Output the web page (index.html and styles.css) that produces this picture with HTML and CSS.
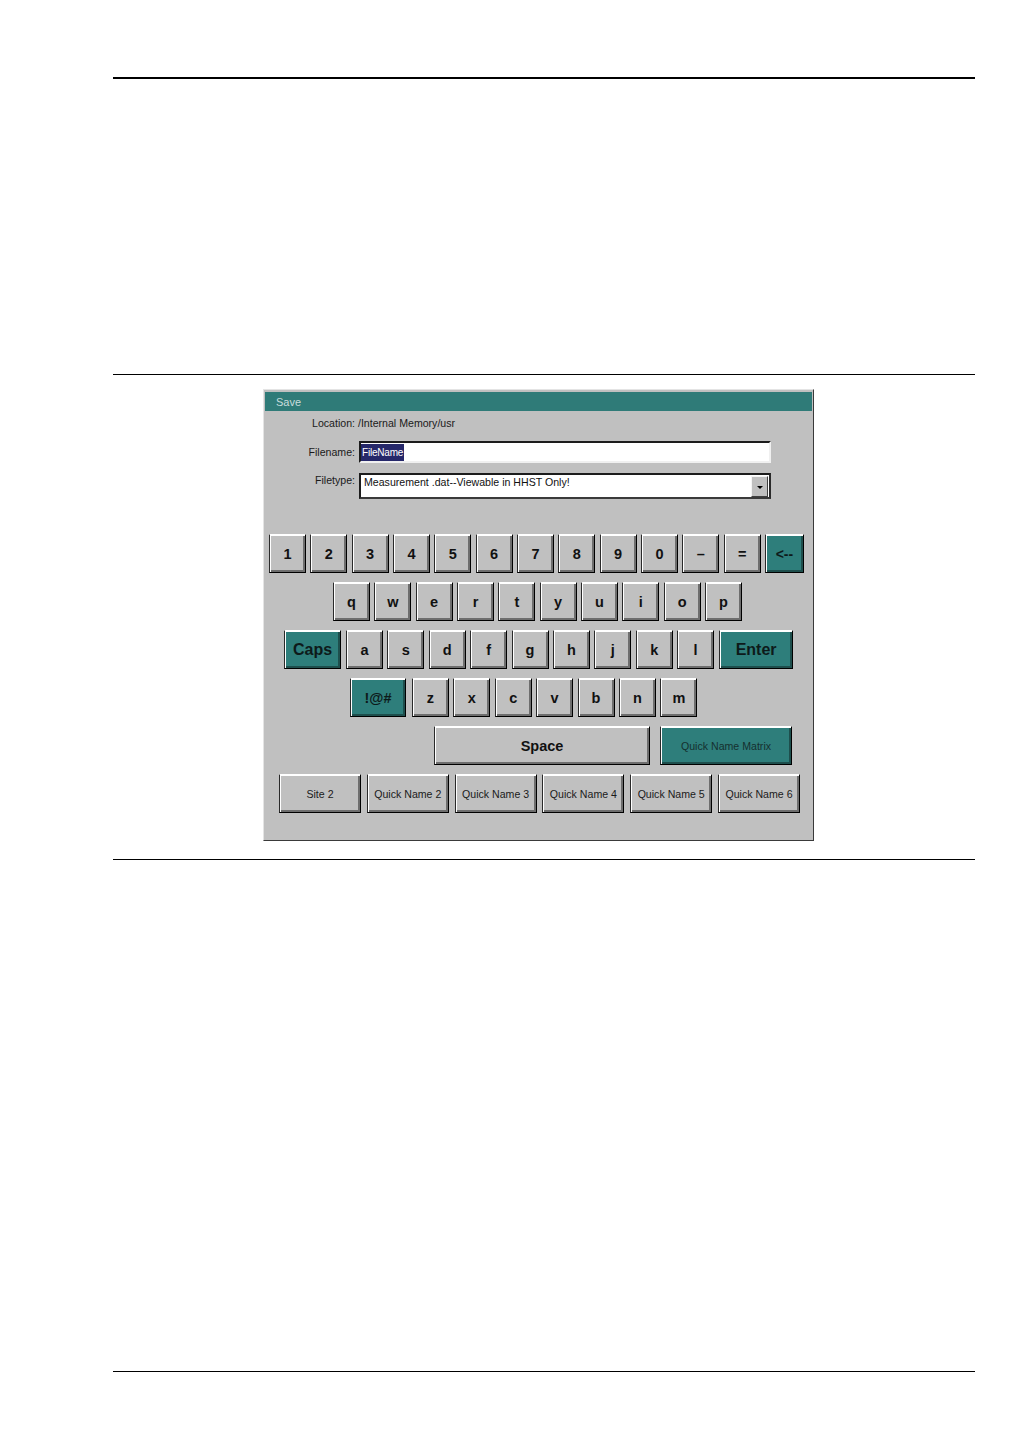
FILE: index.html
```html
<!DOCTYPE html>
<html>
<head>
<meta charset="utf-8">
<link rel="stylesheet" href="styles.css">
</head>
<body>
<div class="page">
  <div class="rule-thick"></div>
  <div class="figure">
    <div class="dialog">
      <div class="titlebar">Save</div>
      <div class="location">Location: /Internal Memory/usr</div>
      <div class="form-row filename-row">
        <span class="label">Filename:</span>
        <div class="input"><span class="sel">FileName</span></div>
      </div>
      <div class="form-row filetype-row">
        <span class="label">Filetype:</span>
        <div class="select">
          <span class="select-text">Measurement .dat--Viewable in HHST Only!</span>
          <span class="drop"><span class="tri"></span></span>
        </div>
      </div>
      <div class="keyboard">
        <div class="krow r1">
          <div class="key">1</div><div class="key">2</div><div class="key">3</div><div class="key">4</div><div class="key">5</div><div class="key">6</div><div class="key">7</div><div class="key">8</div><div class="key">9</div><div class="key">0</div><div class="key">–</div><div class="key">=</div><div class="key teal back">&lt;--</div>
        </div>
        <div class="krow r2">
          <div class="key">q</div><div class="key">w</div><div class="key">e</div><div class="key">r</div><div class="key">t</div><div class="key">y</div><div class="key">u</div><div class="key">i</div><div class="key">o</div><div class="key">p</div>
        </div>
        <div class="krow r3">
          <div class="key teal caps">Caps</div><div class="key">a</div><div class="key">s</div><div class="key">d</div><div class="key">f</div><div class="key">g</div><div class="key">h</div><div class="key">j</div><div class="key">k</div><div class="key">l</div><div class="key teal enter">Enter</div>
        </div>
        <div class="krow r4">
          <div class="key teal sym">!@#</div><div class="key">z</div><div class="key">x</div><div class="key">c</div><div class="key">v</div><div class="key">b</div><div class="key">n</div><div class="key">m</div>
        </div>
        <div class="krow r5">
          <div class="key space">Space</div><div class="key teal qnm">Quick Name Matrix</div>
        </div>
        <div class="krow r6">
          <div class="key qn">Site 2</div><div class="key qn">Quick Name 2</div><div class="key qn">Quick Name 3</div><div class="key qn">Quick Name 4</div><div class="key qn">Quick Name 5</div><div class="key qn">Quick Name 6</div>
        </div>
      </div>
    </div>
  </div>
  <div class="rule-foot"></div>
</div>
</body>
</html>
```
FILE: styles.css
```css
html, body {
  margin: 0;
  padding: 0;
  background: #fff;
}
body {
  font-family: "Liberation Sans", Arial, sans-serif;
  width: 1032px;
  height: 1456px;
  overflow: hidden;
}
.page {
  padding-top: 77px;
  padding-left: 113px;
}
.rule-thick {
  width: 862px;
  height: 0;
  border-top: 2px solid #000;
}
.figure {
  margin-top: 295px;
  width: 862px;
  border-top: 1px solid #000;
  border-bottom: 1px solid #000;
  padding-top: 14px;
  padding-bottom: 18px;
}
.dialog {
  margin-left: 150px;
  width: 551px;
  height: 452px;
  box-sizing: border-box;
  background: #c0c0c0;
  border: 1px solid;
  border-color: #e4e4e4 #3a3a3a #3a3a3a #e4e4e4;
  display: flex;
  flex-direction: column;
}
.titlebar {
  margin: 2px 1px 0 1px;
  height: 19px;
  background: #2f7b78;
  color: #c8dcdc;
  font-size: 11px;
  line-height: 21px;
  padding-left: 11px;
}
.location {
  margin-top: 6px;
  height: 13px;
  line-height: 13px;
  font-size: 10.6px;
  color: #1a1a1a;
  padding-left: 48px;
}
.form-row {
  display: grid;
  grid-template-columns: 91px 412px;
  column-gap: 4px;
}
.filename-row {
  margin-top: 11px;
  height: 22px;
  align-items: center;
}
.filetype-row {
  margin-top: 10px;
  height: 26px;
  align-items: start;
}
.label {
  text-align: right;
  font-size: 10.6px;
  line-height: 13px;
  color: #1a1a1a;
}
.filetype-row .label {
  padding-top: 1px;
}
.input {
  box-sizing: border-box;
  height: 22px;
  background: #fff;
  border: 2px solid;
  border-color: #1c1c1c #f0f0f0 #f0f0f0 #1c1c1c;
  display: flex;
  align-items: center;
  padding-left: 0;
}
.sel {
  background: #26286a;
  color: #fff;
  font-size: 10px;
  line-height: 17px;
  height: 17px;
  padding: 0 1px;
  letter-spacing: -0.2px;
}
.select {
  box-sizing: border-box;
  height: 26px;
  background: #fff;
  border: 2px solid;
  border-color: #1c1c1c #2a2a2a #3a3a3a #1c1c1c;
  display: flex;
  align-items: flex-start;
  justify-content: space-between;
  padding: 1px 1px 0 3px;
}
.select-text {
  font-size: 10.6px;
  line-height: 13px;
  padding-top: 0;
  color: #111;
}
.drop {
  width: 17px;
  height: 21px;
  box-sizing: border-box;
  background: #c0c0c0;
  border: 1px solid;
  border-color: #f4f4f4 #404040 #404040 #f4f4f4;
  display: flex;
  align-items: center;
  justify-content: center;
}
.tri {
  width: 0;
  height: 0;
  border-left: 3px solid transparent;
  border-right: 3px solid transparent;
  border-top: 3px solid #000;
  margin-top: 1px;
}
.keyboard {
  margin-top: 35px;
  display: flex;
  flex-direction: column;
  gap: 9px;
}
.krow {
  display: flex;
  height: 39px;
  gap: 4.33px;
}
.r1 { padding-left: 5px; }
.r2 { padding-left: 69px; }
.r3 { padding-left: 20px; gap: 4.4px; }
.r4 { padding-left: 86px; gap: 4.4px; }
.r5 { padding-left: 170px; gap: 10px; }
.r6 { padding-left: 15px; gap: 5.8px; }
.key {
  box-sizing: border-box;
  width: 37px;
  height: 39px;
  flex: none;
  background: #c0c0c0;
  border: 1px solid;
  border-color: #ffffff #000000 #000000 #2a2a2a;
  box-shadow: inset 1px 1px 0 #ffffff, inset -2px -2px 0 #6e6e6e;
  display: flex;
  align-items: center;
  justify-content: center;
  font-weight: bold;
  font-size: 14.5px;
  color: #111;
}
.teal {
  background: #2e7e7b;
  box-shadow: inset 1px 1px 0 #ffffff, inset -2px -2px 0 #1e4f4d;
  color: #0d1a1a;
}
.back { width: 39px; font-size: 14px; }
.caps { width: 57px; font-size: 16px; margin-right: 0.6px; }
.enter { width: 74px; font-size: 16px; margin-left: 0.6px; }
.sym { width: 56px; margin-right: 1.6px; }
.space { width: 216px; }
.qnm { width: 132px; font-weight: normal; font-size: 10.6px; color: #15302f; }
.qn { width: 82px; font-weight: normal; font-size: 10.6px; color: #1a1a1a; }
.rule-foot {
  margin-top: 511px;
  width: 862px;
  border-top: 1px solid #000;
}
```
